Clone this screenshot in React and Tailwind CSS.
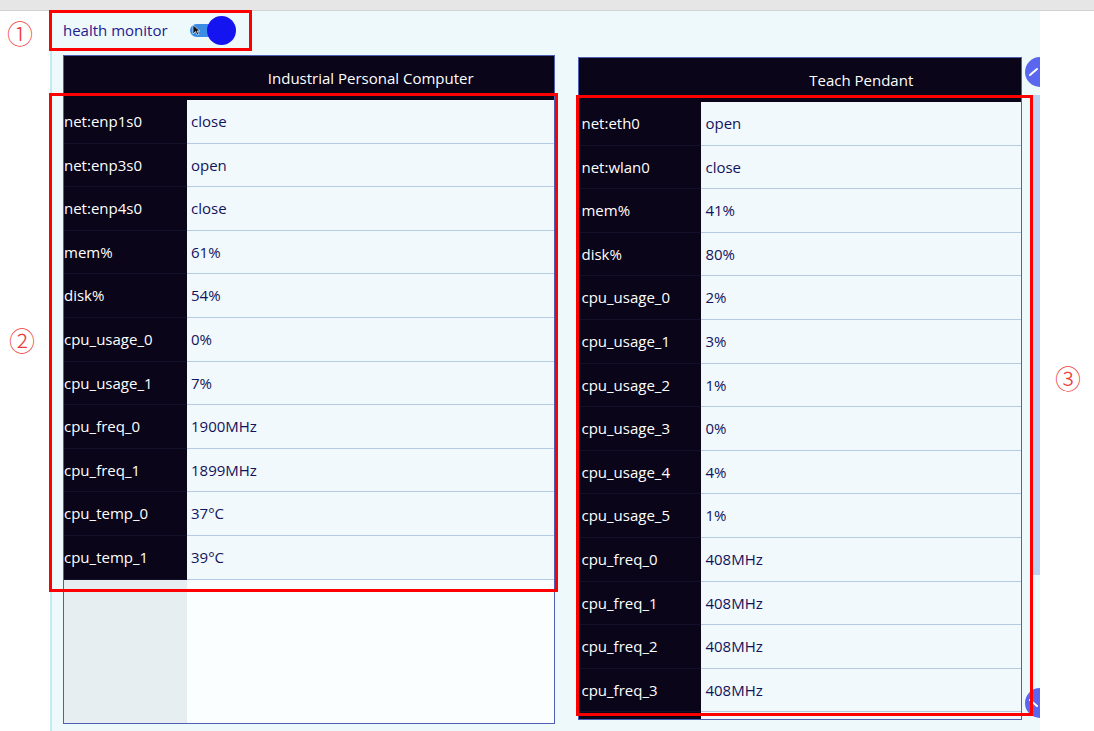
import React from 'react';

const ipcRows = [
  ['net:enp1s0', 'close'],
  ['net:enp3s0', 'open'],
  ['net:enp4s0', 'close'],
  ['mem%', '61%'],
  ['disk%', '54%'],
  ['cpu_usage_0', '0%'],
  ['cpu_usage_1', '7%'],
  ['cpu_freq_0', '1900MHz'],
  ['cpu_freq_1', '1899MHz'],
  ['cpu_temp_0', '37°C'],
  ['cpu_temp_1', '39°C'],
];

const pendantRows = [
  ['net:eth0', 'open'],
  ['net:wlan0', 'close'],
  ['mem%', '41%'],
  ['disk%', '80%'],
  ['cpu_usage_0', '2%'],
  ['cpu_usage_1', '3%'],
  ['cpu_usage_2', '1%'],
  ['cpu_usage_3', '0%'],
  ['cpu_usage_4', '4%'],
  ['cpu_usage_5', '1%'],
  ['cpu_freq_0', '408MHz'],
  ['cpu_freq_1', '408MHz'],
  ['cpu_freq_2', '408MHz'],
  ['cpu_freq_3', '408MHz'],
  ['', ''],
];

function Row({ label, value, labelW, labelPad }) {
  return (
    <div className="flex h-[43.6px] shrink-0">
      <div className={`${labelW} ${labelPad} bg-[#0a0519] text-white flex items-center border-b border-[#15102a]`}>
        {label}
      </div>
      <div className="flex-1 bg-[#f1f9fc] text-[#13135c] flex items-center pl-[4px] border-b border-[#b4cbe2]">
        {value}
      </div>
    </div>
  );
}

function Panel({ title, rows, labelW, labelPad, className }) {
  return (
    <div className={`flex flex-col border border-[#4f5fb4] overflow-hidden ${className}`}>
      {/* header */}
      <div className="flex h-[44px] shrink-0 bg-[#0a0519] text-white">
        <div className={labelW} />
        <div className="flex-1 flex items-center justify-center">{title}</div>
      </div>
      {rows.map(([l, v], i) => (
        <Row key={i} label={l} value={v} labelW={labelW} labelPad={labelPad} />
      ))}
      <div className="flex flex-1">
        <div className={`${labelW} bg-[#e7eef1]`} />
        <div className="flex-1 bg-[#fbfeff]" />
      </div>
    </div>
  );
}

function RoundBtn({ down }) {
  return (
    <div className="w-[30px] h-[30px] ml-[3px] rounded-full bg-[#5a66ee] flex items-center justify-start shrink-0">
      <svg width="16" height="16" viewBox="0 0 16 16" className="ml-[2px]">
        <path d={down ? 'M3 5 L10 11' : 'M3 11 L10 5'} stroke="#ffffff" strokeWidth="2" strokeLinecap="round" fill="none" />
      </svg>
    </div>
  );
}

export default function App() {
  return (
    <div className="w-[1094px] h-[731px] bg-white relative overflow-hidden font-['Open_Sans',sans-serif] text-[15px]">
      {/* browser strip */}
      <div className="h-[11px] bg-[#e6e6e6] border-b border-[#d2d2d2]" />

      <div className="flex h-[720px]">
        <div className="w-[50px] shrink-0" />

        {/* photographed screen */}
        <div className="w-[990px] shrink-0 bg-[#eef9fc] border-l-2 border-[#c6eaf6] flex flex-col overflow-hidden">
          <div className="h-[38px] flex items-center pl-[11px] shrink-0">
            <span className="text-[#1c2090]">health monitor</span>
            <div className="relative ml-[22px] flex items-center">
              <div className="w-[28px] h-[13px] rounded-full bg-[#3a8ce4]" />
              <div className="w-[29px] h-[29px] rounded-full bg-[#1414f0] -ml-[11px]" />
              <svg width="9" height="12" viewBox="0 0 9 12" className="absolute left-[2px] top-[8px]">
                <path d="M1 1 L1 10 L3.5 7.5 L5.5 11 L7 10.3 L5 7 L8 7 Z" fill="#111" stroke="#fff" strokeWidth="0.6" />
              </svg>
            </div>
          </div>

          <div className="flex pl-[11px] gap-[23px] flex-1">
            <Panel
              title="Industrial Personal Computer"
              rows={ipcRows}
              labelW="w-[123px] shrink-0"
              labelPad="pl-0"
              className="w-[493px] mt-[6px] h-[669px]"
            />
            <Panel
              title="Teach Pendant"
              rows={pendantRows}
              labelW="w-[122px] shrink-0"
              labelPad="pl-[2px]"
              className="w-[444px] mt-[8px] h-[663px]"
            />
            {/* scrollbar */}
            <div className="w-[18px] -ml-[23px] flex flex-col shrink-0 overflow-visible">
              <div className="mt-[8px]"><RoundBtn /></div>
              <div className="mt-[8px] ml-[8px] w-[12px] h-[480px] bg-[#bcd2f2]" />
              <div className="mt-[113px]"><RoundBtn down /></div>
            </div>
          </div>
        </div>
      </div>

      {/* annotations */}
      <div className="absolute left-[49px] top-[10px] w-[203px] h-[41px] border-[3px] border-[#ff0000]" />
      <div className="absolute left-[49px] top-[93px] w-[509px] h-[499px] border-[3px] border-[#ff0000]" />
      <div className="absolute left-[576px] top-[95px] w-[457px] h-[621px] border-[3px] border-[#ff0000]" />
      <div className="absolute left-[7px] top-[18px] text-[#f03a3a] text-[26px] leading-[30px] font-['Noto_Sans_CJK_JP',sans-serif] font-light">①</div>
      <div className="absolute left-[9px] top-[325px] text-[#f03a3a] text-[26px] leading-[30px] font-['Noto_Sans_CJK_JP',sans-serif] font-light">②</div>
      <div className="absolute left-[1055px] top-[363px] text-[#f03a3a] text-[26px] leading-[30px] font-['Noto_Sans_CJK_JP',sans-serif] font-light">③</div>
    </div>
  );
}
